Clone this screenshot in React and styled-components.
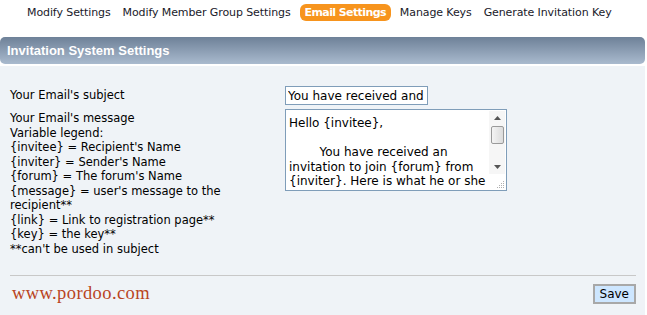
import React from 'react';
import styled, { createGlobalStyle } from 'styled-components';

const GlobalStyle = createGlobalStyle`
  body {
    margin: 0;
    background: #ffffff;
    font-family: 'DejaVu Sans', Verdana, sans-serif;
    color: #000;
  }
`;

const Page = styled.div`
  width: 647px;
  height: 315px;
  overflow: hidden;
`;

const Nav = styled.nav`
  display: flex;
  align-items: center;
  gap: 6px;
  padding: 3px 0 0 24px;
  height: 18px;
`;

const Tab = styled.a`
  font-size: 11px;
  line-height: 17px;
  padding: ${(p) => (p.active ? '0 5px' : '0 3px')};
  border-radius: 6px;
  color: ${(p) => (p.active ? '#ffffff' : '#1a1a2a')};
  background: ${(p) => (p.active ? '#f7941d' : 'transparent')};
  font-weight: ${(p) => (p.active ? 'bold' : 'normal')};
  letter-spacing: ${(p) => (p.active ? '-0.6px' : '-0.1px')};
  cursor: pointer;
`;

const Header = styled.div`
  margin: 16px 2px 0 0;
  height: 27px;
  display: flex;
  align-items: center;
  padding-left: 7px;
  border-radius: 5px;
  background: linear-gradient(#6e8198, #a9bace);
  color: #ffffff;
  font-family: 'Liberation Sans', Arial, sans-serif;
  font-weight: bold;
  font-size: 13px;
`;

const Panel = styled.div`
  margin: 2px 2px 0 0;
  background: #eff3f7;
  height: 249px;
  padding: 20px 9px 0 10px;
  box-sizing: border-box;
`;

const Form = styled.div`
  display: grid;
  grid-template-columns: 275px 1fr;
  row-gap: 4px;
  font-size: 11.5px;
  line-height: 14.5px;
`;

const Label = styled.div`
  padding-top: ${(p) => p.top || 0}px;
`;

const Line = styled.div``;

const TextInput = styled.input`
  width: 143px;
  height: 19px;
  box-sizing: border-box;
  border: 1px solid #7f9db9;
  font-family: inherit;
  font-size: 12px;
  padding: 0 2px;
  background: #fff;
  outline: none;
`;

const AreaBox = styled.div`
  position: relative;
  display: flex;
  width: 222px;
  height: 82px;
  box-sizing: border-box;
  border: 1px solid #7f9db9;
  background: #fff;
`;

const TextArea = styled.textarea`
  flex: 1;
  border: 0;
  font-family: inherit;
  font-size: 12px;
  line-height: 14.5px;
  padding: 6px 3px 0 3px;
  resize: none;
  overflow: hidden;
  outline: none;
  background: transparent;
`;

const Scrollbar = styled.div`
  width: 16px;
  margin: 1px 1px 16px 0;
  background: #f6f6f6;
  display: flex;
  flex-direction: column;
  align-items: center;
`;

const Arrow = styled.div`
  height: 14px;
  width: 16px;
  display: flex;
  align-items: center;
  justify-content: center;
`;

const Thumb = styled.div`
  width: 13px;
  height: 18px;
  margin-top: 1px;
  box-sizing: border-box;
  border: 1px solid #9a9a9a;
  border-radius: 2px;
  background: linear-gradient(90deg, #f4f4f4, #dcdcdc);
`;

const Spacer = styled.div`
  flex: 1;
`;

const Grip = styled.svg`
  position: absolute;
  right: 1px;
  bottom: 1px;
`;

const Divider = styled.hr`
  border: 0;
  border-top: 1px solid #c8c8c8;
  margin: 0;
`;

const Footer = styled.div`
  display: flex;
  justify-content: space-between;
  align-items: center;
  padding: 5px 0 0 2px;
`;

const Logo = styled.div`
  font-family: 'Liberation Serif', serif;
  font-size: 18.5px;
  color: #b9441e;
  letter-spacing: 0.4px;
  margin-top: 2px;
`;

const SaveButton = styled.button`
  font-family: inherit;
  font-size: 12px;
  height: 20px;
  padding: 0 5px;
  background: #cde6ff;
  border: 2px solid #a8a8a8;
  margin-top: 2px;
  cursor: pointer;
`;

const message = `Hello {invitee},

        You have received an invitation to join {forum} from {inviter}. Here is what he or she wrote:

{message}`;

const UpArrow = () => (
  <svg width="7" height="4" viewBox="0 0 7 4">
    <path d="M0 4 L3.5 0 L7 4 Z" fill="#555" />
  </svg>
);

const DownArrow = () => (
  <svg width="7" height="4" viewBox="0 0 7 4">
    <path d="M0 0 L3.5 4 L7 0 Z" fill="#555" />
  </svg>
);

export default function App() {
  return (
    <Page>
      <GlobalStyle />
      <Nav>
        <Tab>Modify Settings</Tab>
        <Tab>Modify Member Group Settings</Tab>
        <Tab active>Email Settings</Tab>
        <Tab>Manage Keys</Tab>
        <Tab>Generate Invitation Key</Tab>
      </Nav>
      <Header>Invitation System Settings</Header>
      <Panel>
        <Form>
          <Label top={2}>Your Email's subject</Label>
          <div>
            <TextInput defaultValue="You have received and invitation" />
          </div>
          <Label top={2}>
            <Line>Your Email's message</Line>
            <Line>Variable legend:</Line>
            <Line>{'{invitee}'} = Recipient's Name</Line>
            <Line>{'{inviter}'} = Sender's Name</Line>
            <Line>{'{forum}'} = The forum's Name</Line>
            <Line>{'{message}'} = user's message to the recipient**</Line>
            <Line>{'{link}'} = Link to registration page**</Line>
            <Line>{'{key}'} = the key**</Line>
            <Line>**can't be used in subject</Line>
          </Label>
          <div>
            <AreaBox>
              <TextArea defaultValue={message} />
              <Scrollbar>
                <Arrow>
                  <UpArrow />
                </Arrow>
                <Thumb />
                <Spacer />
                <Arrow>
                  <DownArrow />
                </Arrow>
              </Scrollbar>
              <Grip width="9" height="9" viewBox="0 0 9 9">
                <g fill="#b0b0b0">
                  <rect x="7" y="1" width="1" height="1" />
                  <rect x="5" y="3" width="1" height="1" />
                  <rect x="7" y="3" width="1" height="1" />
                  <rect x="3" y="5" width="1" height="1" />
                  <rect x="5" y="5" width="1" height="1" />
                  <rect x="7" y="5" width="1" height="1" />
                  <rect x="1" y="7" width="1" height="1" />
                  <rect x="3" y="7" width="1" height="1" />
                  <rect x="5" y="7" width="1" height="1" />
                  <rect x="7" y="7" width="1" height="1" />
                </g>
              </Grip>
            </AreaBox>
          </div>
        </Form>
        <div style={{ height: 19 }} />
        <Divider />
        <Footer>
          <Logo>www.pordoo.com</Logo>
          <SaveButton>Save</SaveButton>
        </Footer>
      </Panel>
    </Page>
  );
}
